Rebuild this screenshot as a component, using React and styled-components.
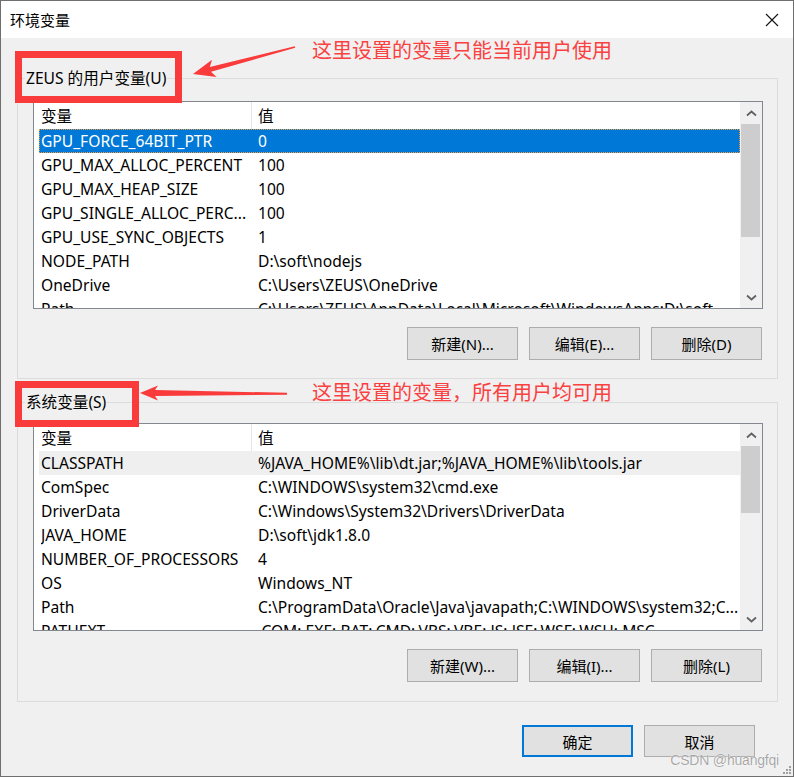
import React from 'react';
import styled, { createGlobalStyle } from 'styled-components';

const GlobalStyle = createGlobalStyle`
  html, body {
    margin: 0;
    padding: 0;
    background: #ffffff;
  }
  body {
    font-family: "Noto Sans", "Noto Sans CJK SC", sans-serif;
  }
`;

const Window = styled.div`
  position: relative;
  width: 794px;
  height: 777px;
  box-sizing: border-box;
  border: 1px solid #6f6f6f;
  background: #f0f0f0;
  display: flex;
  flex-direction: column;
  overflow: hidden;
  color: #000;
  font-size: 15.6px;
`;

const TitleBar = styled.div`
  height: 37px;
  flex-shrink: 0;
  background: #ffffff;
  display: flex;
  align-items: center;
  justify-content: space-between;
  padding: 0 14px 0 9px;
`;

const Title = styled.span`
  font-family: "Noto Sans CJK SC", sans-serif;
  font-size: 15px;
  line-height: 20px;
`;

const Body = styled.div`
  flex: 1;
  display: flex;
  flex-direction: column;
  padding: 0 15px 0 16px;
`;

const Group = styled.fieldset`
  margin: ${(p) => p.$top}px 0 0;
  padding: ${(p) => p.$gap}px 14px ${(p) => p.$bottom}px 15px;
  border: 1px solid #dcdcdc;
  min-width: 0;
`;

const Legend = styled.legend`
  margin-left: -8px;
  padding: 0 1px;
  font-size: 15.6px;
  line-height: 20px;
`;

const ListBox = styled.div`
  height: 208px;
  box-sizing: border-box;
  border: 1px solid #828790;
  background: #ffffff;
  display: flex;
`;

const ListMain = styled.div`
  flex: 1;
  min-width: 0;
  overflow: hidden;
  display: flex;
  flex-direction: column;
`;

const HeaderRow = styled.div`
  display: grid;
  grid-template-columns: 218px 1fr;
  height: 27px;
  flex-shrink: 0;
`;

const HeaderCell = styled.div`
  display: flex;
  align-items: center;
  padding-left: ${(p) => (p.$first ? 7 : 6)}px;
  border-right: ${(p) => (p.$first ? '1px solid #e5e5e5' : 'none')};
`;

const Row = styled.div`
  display: grid;
  grid-template-columns: 217px 1fr;
  height: 24px;
  flex-shrink: 0;
  margin-left: 5px;
  padding-left: 2px;
  align-items: center;
  box-sizing: border-box;
  background: ${(p) => (p.$selected ? '#0078d7' : p.$hover ? '#efefef' : 'transparent')};
  color: ${(p) => (p.$selected ? '#ffffff' : '#000000')};
  outline: ${(p) => (p.$selected ? '1px dotted #f39a3a' : 'none')};
  outline-offset: -1px;
`;

const Cell = styled.span`
  white-space: nowrap;
  overflow: hidden;
  line-height: 24px;
  padding-right: 2px;
`;

const ScrollBar = styled.div`
  width: 22px;
  flex-shrink: 0;
  background: #f0f0f0;
  display: flex;
  flex-direction: column;
`;

const ScrollArrow = styled.div`
  height: 22px;
  flex-shrink: 0;
  display: flex;
  align-items: center;
  justify-content: center;
`;

const ScrollTrack = styled.div`
  flex: 1;
  display: flex;
  flex-direction: column;
`;

const Thumb = styled.div`
  height: ${(p) => p.$size}px;
  margin: 0 2px 0 1px;
  background: #cdcdcd;
`;

const ButtonRow = styled.div`
  display: flex;
  justify-content: flex-end;
  gap: ${(p) => p.$gap || 11}px;
  margin-top: ${(p) => p.$top}px;
  padding-right: ${(p) => p.$right || 0}px;
`;

const Button = styled.button`
  width: 111px;
  height: ${(p) => p.$height || 33}px;
  box-sizing: border-box;
  margin: 0;
  padding: 0;
  background: #e1e1e1;
  border: ${(p) => (p.$primary ? '2px solid #0078d7' : '1px solid #adadad')};
  font-family: "Noto Sans", "Noto Sans CJK SC", sans-serif;
  font-size: 15px;
  color: #000;
`;

const Annotations = styled.div`
  position: absolute;
  left: -1px;
  top: -1px;
  width: 794px;
  height: 777px;
  pointer-events: none;
`;

const RedBox = styled.div`
  position: absolute;
  left: ${(p) => p.$x}px;
  top: ${(p) => p.$y}px;
  width: ${(p) => p.$w}px;
  height: ${(p) => p.$h}px;
  box-sizing: border-box;
  border: 7px solid #f93b3b;
`;

const RedNote = styled.div`
  position: absolute;
  left: ${(p) => p.$x}px;
  top: ${(p) => p.$y}px;
  font-family: "Noto Sans CJK SC", sans-serif;
  font-size: 20px;
  line-height: 24px;
  color: #fa4040;
  white-space: nowrap;
`;

const ArrowLayer = styled.svg`
  position: absolute;
  left: 0;
  top: 0;
`;

const Watermark = styled.div`
  position: absolute;
  right: 14px;
  bottom: 8px;
  font-family: "Liberation Sans", sans-serif;
  font-size: 14px;
  color: rgba(150, 150, 150, 0.85);
  text-shadow: 0 0 1px #ffffff, 0 0 1px #ffffff;
  letter-spacing: -0.2px;
`;

const Grip = styled.svg`
  position: absolute;
  right: 1px;
  bottom: 1px;
`;

const Chevron = ({ down }) => (
  <svg width="11" height="7" viewBox="0 0 11 7">
    <polyline
      points={down ? '1,1.5 5.5,5.5 10,1.5' : '1,5.5 5.5,1.5 10,5.5'}
      fill="none"
      stroke="#606060"
      strokeWidth="1.7"
    />
  </svg>
);

function VarList({ rows, thumb }) {
  return (
    <ListBox>
      <ListMain>
        <HeaderRow>
          <HeaderCell $first>变量</HeaderCell>
          <HeaderCell>值</HeaderCell>
        </HeaderRow>
        {rows.map((r) => (
          <Row key={r.name} $selected={r.selected} $hover={r.hover}>
            <Cell>{r.name}</Cell>
            <Cell>{r.value}</Cell>
          </Row>
        ))}
      </ListMain>
      <ScrollBar>
        <ScrollArrow>
          <Chevron />
        </ScrollArrow>
        <ScrollTrack>
          <Thumb $size={thumb} />
        </ScrollTrack>
        <ScrollArrow>
          <Chevron down />
        </ScrollArrow>
      </ScrollBar>
    </ListBox>
  );
}

const userVars = [
  { name: 'GPU_FORCE_64BIT_PTR', value: '0', selected: true },
  { name: 'GPU_MAX_ALLOC_PERCENT', value: '100' },
  { name: 'GPU_MAX_HEAP_SIZE', value: '100' },
  { name: 'GPU_SINGLE_ALLOC_PERC...', value: '100' },
  { name: 'GPU_USE_SYNC_OBJECTS', value: '1' },
  { name: 'NODE_PATH', value: 'D:\\soft\\nodejs' },
  { name: 'OneDrive', value: 'C:\\Users\\ZEUS\\OneDrive' },
  { name: 'Path', value: 'C:\\Users\\ZEUS\\AppData\\Local\\Microsoft\\WindowsApps;D:\\soft...' },
];

const systemVars = [
  { name: 'CLASSPATH', value: '%JAVA_HOME%\\lib\\dt.jar;%JAVA_HOME%\\lib\\tools.jar', hover: true },
  { name: 'ComSpec', value: 'C:\\WINDOWS\\system32\\cmd.exe' },
  { name: 'DriverData', value: 'C:\\Windows\\System32\\Drivers\\DriverData' },
  { name: 'JAVA_HOME', value: 'D:\\soft\\jdk1.8.0' },
  { name: 'NUMBER_OF_PROCESSORS', value: '4' },
  { name: 'OS', value: 'Windows_NT' },
  { name: 'Path', value: 'C:\\ProgramData\\Oracle\\Java\\javapath;C:\\WINDOWS\\system32;C...' },
  { name: 'PATHEXT', value: '.COM;.EXE;.BAT;.CMD;.VBS;.VBE;.JS;.JSE;.WSF;.WSH;.MSC' },
];

export default function App() {
  return (
    <>
      <GlobalStyle />
      <Window>
        <TitleBar>
          <Title>环境变量</Title>
          <svg width="14" height="14" viewBox="0 0 14 14">
            <path d="M1 1 L13 13 M13 1 L1 13" stroke="#111" strokeWidth="1.1" />
          </svg>
        </TitleBar>

        <Body>
          <Group $top={30} $gap={13} $bottom={18}>
            <Legend>ZEUS 的用户变量(U)</Legend>
            <VarList rows={userVars} thumb={113} />
            <ButtonRow $top={18} $right={1}>
              <Button>新建(N)...</Button>
              <Button>编辑(E)...</Button>
              <Button>删除(D)</Button>
            </ButtonRow>
          </Group>

          <Group $top={13} $gap={11} $bottom={19}>
            <Legend>系统变量(S)</Legend>
            <VarList rows={systemVars} thumb={67} />
            <ButtonRow $top={18} $right={1}>
              <Button>新建(W)...</Button>
              <Button>编辑(I)...</Button>
              <Button>删除(L)</Button>
            </ButtonRow>
          </Group>

          <ButtonRow $top={23} $right={23}>
            <Button $primary $height={32}>确定</Button>
            <Button $height={32}>取消</Button>
          </ButtonRow>
        </Body>

        <Annotations>
          <RedBox $x={15} $y={51} $w={167} $h={52} />
          <RedBox $x={15} $y={381} $w={124} $h={46} />
          <ArrowLayer width="794" height="777" viewBox="0 0 794 777">
            <polygon
              fill="#f93b3b"
              points="193,74 216.6,77.1 211.0,71.8 295.2,47.8 294.8,46.2 209.8,67.0 212.0,59.7"
            />
            <polygon
              fill="#f93b3b"
              points="140,393 158,400.5 155,396 287,394.8 287,392.8 155,390 158,385.5"
            />
          </ArrowLayer>
          <RedNote $x={312} $y={38}>这里设置的变量只能当前用户使用</RedNote>
          <RedNote $x={312} $y={380}>这里设置的变量，所有用户均可用</RedNote>
        </Annotations>

        <Watermark>CSDN @huangfqi</Watermark>
        <Grip width="10" height="10" viewBox="0 0 10 10">
          <g fill="#a0a0a0">
            <rect x="7" y="1" width="2" height="2" />
            <rect x="4" y="4" width="2" height="2" />
            <rect x="7" y="4" width="2" height="2" />
            <rect x="1" y="7" width="2" height="2" />
            <rect x="4" y="7" width="2" height="2" />
            <rect x="7" y="7" width="2" height="2" />
          </g>
        </Grip>
      </Window>
    </>
  );
}
